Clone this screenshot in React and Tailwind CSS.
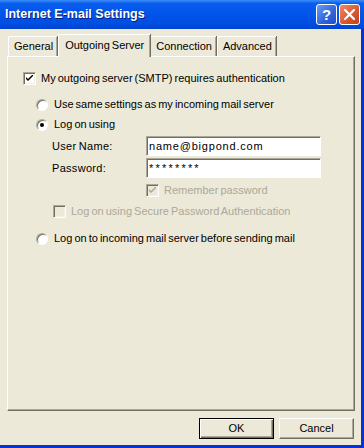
import React from "react";

function CheckBox({ checked, disabled }) {
  return (
    <span
      className={`relative inline-block w-[13px] h-[13px] shrink-0 border border-t-[#aca899] border-l-[#aca899] border-r-white border-b-white shadow-[inset_1px_1px_0_#716f64,inset_-1px_-1px_0_#f1efe2] ${
        disabled ? "bg-[#ece9d8]" : "bg-white"
      }`}
    >
      {checked && (
        <svg className="absolute left-[2px] top-[2px]" width="7" height="7" viewBox="0 0 7 7">
          <path
            d="M0 2 L0 4 L2 6 L7 1 L7 -1 L2 4 Z"
            fill={disabled ? "#aca899" : "#000"}
          />
        </svg>
      )}
    </span>
  );
}

function Radio({ checked }) {
  return (
    <span className="relative inline-block w-[12px] h-[12px] shrink-0 rounded-full bg-white border border-t-[#aca899] border-l-[#aca899] border-r-white border-b-white shadow-[inset_1px_1px_0_#716f64]">
      {checked && <span className="absolute left-[3px] top-[3px] w-[4px] h-[4px] rounded-full bg-black" />}
    </span>
  );
}

function Field({ children }) {
  return (
    <div className="w-[175px] h-[20px] bg-white border border-t-[#aca899] border-l-[#aca899] border-r-white border-b-white shadow-[inset_1px_1px_0_#716f64] pl-[2px] flex items-center">
      {children}
    </div>
  );
}

function Tab({ label, active }) {
  if (active) {
    return (
      <div className="relative z-10 h-[23px] -mb-px px-[6px] flex items-start pt-[4px] bg-[#ece9d8] border-l border-t border-white rounded-tl-[2px] shadow-[inset_-1px_0_0_#aca899,1px_0_0_#716f64]">
        {label}
      </div>
    );
  }
  return (
    <div className="h-[20px] pl-[5px] pr-[4px] flex items-start pt-[3px] border-l border-t border-white rounded-tl-[2px] shadow-[inset_-1px_0_0_#aca899,1px_0_0_#716f64] mr-px">
      {label}
    </div>
  );
}

function Button({ label, def }) {
  return (
    <div
      className={`w-[75px] h-[21px] flex items-center justify-center border ${
        def
          ? "border-black shadow-[inset_1px_1px_0_white,inset_-1px_-1px_0_#716f64,inset_-2px_-2px_0_#aca899]"
          : "border-t-white border-l-white border-r-[#716f64] border-b-[#716f64] shadow-[inset_-1px_-1px_0_#aca899]"
      }`}
    >
      {label}
    </div>
  );
}

export default function App() {
  return (
    <div className="w-[364px] h-[448px] flex flex-col bg-[#0831d9] text-[11px] text-black font-['Tahoma','Liberation_Sans',sans-serif] leading-[13px] [word-spacing:-1px]">
      {/* title bar */}
      <div className="h-[29px] shrink-0 flex items-center pl-[5px] pr-[4px] bg-[linear-gradient(to_bottom,#3b8df9_0%,#0a5ded_12%,#0055ea_45%,#004fe2_80%,#0043cf_100%)]">
        <span className="font-bold text-[12.5px] text-white [text-shadow:1px_1px_0_#0a1e74] font-['Trebuchet_MS','Liberation_Sans',sans-serif] [word-spacing:0px]">
          Internet E-mail Settings
        </span>
        <div className="ml-auto flex gap-[2px]">
          <div className="w-[21px] h-[21px] rounded-[3px] border border-white bg-[linear-gradient(135deg,#6a9cf4,#2f63dc_60%,#1e4fcc)] flex items-center justify-center text-white font-bold text-[15px] font-['Liberation_Sans',sans-serif]">
            ?
          </div>
          <div className="w-[21px] h-[21px] rounded-[3px] border border-white bg-[linear-gradient(135deg,#f08a63,#d9562b_60%,#c2401b)] flex items-center justify-center">
            <svg width="11" height="11" viewBox="0 0 11 11">
              <path d="M1 1 L10 10 M10 1 L1 10" stroke="white" strokeWidth="2.2" strokeLinecap="square" />
            </svg>
          </div>
        </div>
      </div>

      {/* body */}
      <div className="flex-1 mr-[3px] mb-[3px] bg-[#ece9d8] flex flex-col pl-[7px] pr-[6px] pt-[4px]">
        <div className="flex items-end h-[23px] pl-px">
          <Tab label="General" />
          <Tab label="Outgoing Server" active />
          <Tab label="Connection" />
          <Tab label="Advanced" />
        </div>

        <div className="h-[355px] border-l border-t border-white border-r border-b border-r-[#716f64] border-b-[#716f64] shadow-[inset_-1px_-1px_0_#aca899] flex flex-col pl-[15px] pt-[15px]">
          <div className="flex items-center gap-[5px] h-[13px]">
            <CheckBox checked />
            <span>My outgoing server (SMTP) requires authentication</span>
          </div>

          <div className="flex items-center gap-[6px] h-[13px] mt-[13px] pl-[13px]">
            <Radio />
            <span>Use same settings as my incoming mail server</span>
          </div>
          <div className="flex items-center gap-[6px] h-[13px] mt-[7px] pl-[13px]">
            <Radio checked />
            <span>Log on using</span>
          </div>

          <div className="flex items-center h-[20px] mt-[5px] pl-[29px]">
            <span className="w-[94px] tracking-[0.3px]">User Name:</span>
            <Field>
              <span className="tracking-[0.8px]">name@bigpond.com</span>
            </Field>
          </div>
          <div className="flex items-center h-[20px] mt-[2px] pl-[29px]">
            <span className="w-[94px] tracking-[0.3px]">Password:</span>
            <Field>
              <span className="tracking-[2.2px]">********</span>
            </Field>
          </div>

          <div className="flex items-center gap-[5px] h-[13px] mt-[6px] pl-[123px] text-[#aca899]">
            <CheckBox checked disabled />
            <span>Remember password</span>
          </div>
          <div className="flex items-center gap-[5px] h-[13px] mt-[8px] pl-[30px] text-[#aca899]">
            <CheckBox disabled />
            <span>Log on using Secure Password Authentication</span>
          </div>

          <div className="flex items-center gap-[6px] h-[13px] mt-[14px] pl-[13px]">
            <Radio />
            <span>Log on to incoming mail server before sending mail</span>
          </div>
        </div>

        <div className="flex justify-end gap-[5px] mt-[7px] pr-px">
          <Button label="OK" def />
          <Button label="Cancel" />
        </div>
      </div>
    </div>
  );
}
